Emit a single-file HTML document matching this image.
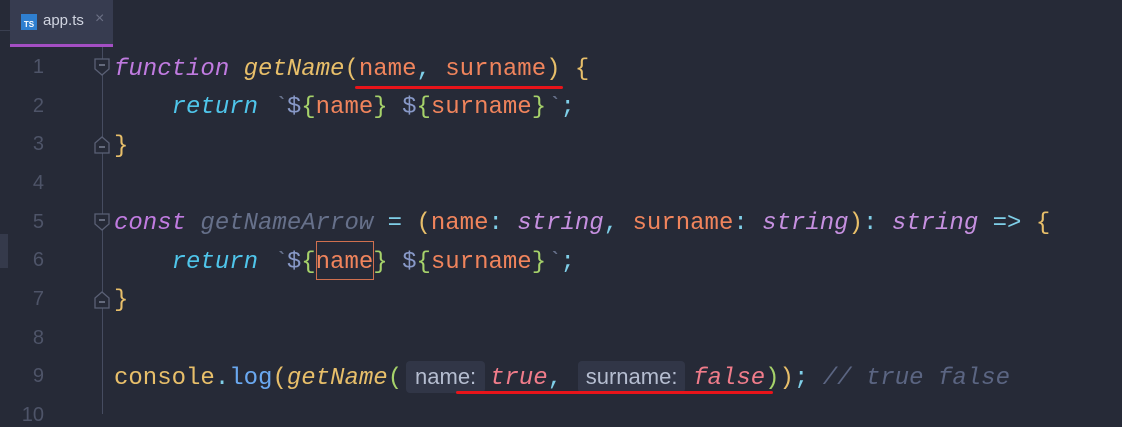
<!DOCTYPE html>
<html><head><meta charset="utf-8"><style>
body{margin:0;width:1122px;height:414px;background:#262a37;overflow:hidden;position:relative;font-family:"Liberation Mono",monospace;}
.tab{position:absolute;left:10px;top:0;width:103px;height:44px;background:#373c50;border-bottom:3px solid #a44fc4;}
.tab .ic{position:absolute;left:11px;top:14px;width:16px;height:16px;background:#2f7fd0;color:#fff;font:bold 8px "Liberation Sans",sans-serif;line-height:22px;text-align:center}
.tab .t{position:absolute;left:33px;top:12px;font:15px "Liberation Sans",sans-serif;color:#d0d4e0}
.tab .x{position:absolute;left:85px;top:10px;font:16px "Liberation Sans",sans-serif;color:#6c7186}
.ln{position:absolute;left:0;width:44px;text-align:right;color:#4e5468;font-size:20px;font-family:"Liberation Sans",sans-serif}
.code{position:absolute;left:114px;white-space:pre;font-size:24px;color:#c0c6d8;line-height:38px}
.kw{color:#c07be0;font-style:italic}.fn{color:#e8bf6a;font-style:italic}.p{color:#e8bf6a}
.v{color:#f0845c}.rt{color:#4fc5ea;font-style:italic}.tp{color:#8899c8}.br{color:#a6d26a}
.c{color:#7fcfe8}.ty{color:#c690e0;font-style:italic}.bo{color:#f07c8a;font-style:italic}
.cm{color:#5b6582;font-style:italic}.pl{color:#e8bf6a}.gr{color:#66708a;font-style:italic}
.hint{display:inline-block;background:#313647;color:#b5bdd0;font:22px "Liberation Sans",sans-serif;border-radius:4px;line-height:32px;text-align:center;vertical-align:0}
.ul{position:absolute;height:3px;background:#e8141a;border-radius:2px}
</style></head><body>
<div style="position:absolute;left:0;top:30px;width:10px;height:1px;background:#3a3f50"></div>
<div class="tab"><div class="ic">TS</div><div class="t">app.ts</div><div class="x">×</div></div>
<div style="position:absolute;left:0;top:234px;width:8px;height:34px;background:#353a4b"></div>
<div style="position:absolute;left:102px;top:47px;width:1px;height:367px;background:#464c60"></div>
<svg style="position:absolute;left:0;top:0" width="120" height="414">
<g fill="#262a37" stroke="#5a6075" stroke-width="1.3">
<path d="M95 59h14v10l-7 6l-7-6z"/><path d="M95 153h14v-10l-7-6l-7 6z"/>
<path d="M95 214h14v10l-7 6l-7-6z"/><path d="M95 308h14v-10l-7-6l-7 6z"/>
</g><g stroke="#8a90a5" stroke-width="1.3"><path d="M99 65h6M99 147h6M99 220h6M99 302h6"/></g></svg>
<div class="ln" style="top:56px">1</div><div class="ln" style="top:95px">2</div><div class="ln" style="top:133px">3</div>
<div class="ln" style="top:172px">4</div><div class="ln" style="top:211px">5</div><div class="ln" style="top:249px">6</div>
<div class="ln" style="top:288px">7</div><div class="ln" style="top:327px">8</div><div class="ln" style="top:365px">9</div>
<div class="ln" style="top:404px">10</div>
<div class="code" style="top:51px"><span class="kw">function</span> <span class="fn">getName</span><span class="p">(</span><span class="v">name</span><span class="c">,</span> <span class="v">surname</span><span class="p">)</span> <span class="p">{</span></div>
<div class="code" style="top:89px">    <span class="rt">return</span> <span class="gr">`</span><span class="tp">$</span><span class="br">{</span><span class="v">name</span><span class="br">}</span> <span class="tp">$</span><span class="br">{</span><span class="v">surname</span><span class="br">}</span><span class="gr">`</span><span class="c">;</span></div>
<div class="code" style="top:128px"><span class="p">}</span></div>
<div class="code" style="top:205px"><span class="kw">const</span> <span class="gr">getNameArrow</span> <span class="c">=</span> <span class="p">(</span><span class="v">name</span><span class="c">:</span> <span class="ty">string</span><span class="c">,</span> <span class="v">surname</span><span class="c">:</span> <span class="ty">string</span><span class="p">)</span><span class="c">:</span> <span class="ty">string</span> <span class="c">=&gt;</span> <span class="p">{</span></div>
<div class="code" style="top:244px">    <span class="rt">return</span> <span class="gr">`</span><span class="tp">$</span><span class="br">{</span><span class="v">name</span><span class="br">}</span> <span class="tp">$</span><span class="br">{</span><span class="v">surname</span><span class="br">}</span><span class="gr">`</span><span class="c">;</span></div>
<div class="code" style="top:282px"><span class="p">}</span></div>
<div class="code" style="top:360px"><span class="pl">console</span><span class="c">.</span><span style="color:#6aa8f0">log</span><span class="p">(</span><span class="fn">getName</span><span class="br">(</span><span class="hint" style="width:79px;margin-left:4px;margin-right:5px">name:</span><span class="bo">true</span><span class="c">,</span><span class="hint" style="width:107px;margin-left:16px;margin-right:8px">surname:</span><span class="bo">false</span><span class="br">)</span><span class="p">)</span><span class="c">;</span> <span class="cm">// true false</span></div>
<div style="position:absolute;left:316px;top:241px;width:56px;height:37px;border:1px solid #d0704f"></div>
<div class="ul" style="left:355px;top:86px;width:208px"></div>
<div class="ul" style="left:456px;top:391px;width:317px"></div>
</body></html>
